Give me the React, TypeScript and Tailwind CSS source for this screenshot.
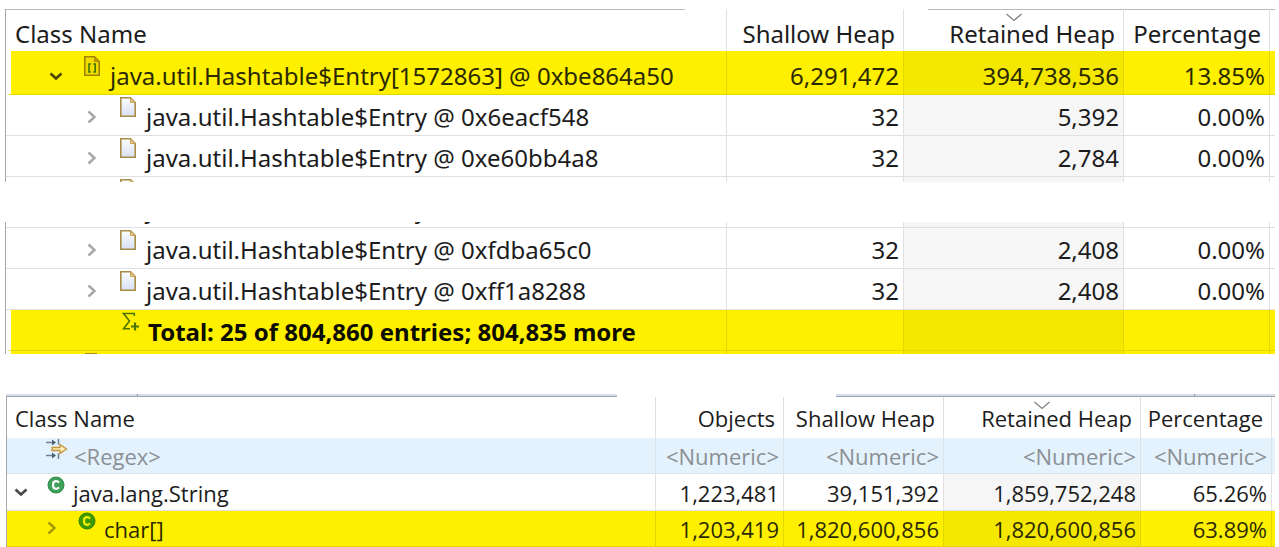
import React from "react";

function DocIcon({ array = false }: { array?: boolean }) {
  return (
    <svg viewBox="0 0 16 20" className="h-5 w-4 shrink-0" aria-hidden="true">
      <defs>
        <linearGradient id="page" x1="0" y1="0" x2="0" y2="1">
          <stop offset="0" stopColor="#fdfdff" />
          <stop offset="1" stopColor="#d6e1f3" />
        </linearGradient>
      </defs>
      <path
        d="M0.8 0.8H10.5L15.2 5.500V19.200H0.8Z"
        fill={array ? "#f2dc00" : "url(#page)"}
        stroke={array ? "#a08400" : "#a88c48"}
        strokeWidth="1.600"
      />
      <path d="M10.500 1V5.500H15Z" fill={array ? "#c49a00" : "#e3c88a"} stroke={array ? "#b08a00" : "#c8a558"} />
      {array && <path d="M6.800 8H5V16H6.800M9.400 8H11.200V16H9.400" fill="none" stroke="#3f7a00" strokeWidth="1.600" />}
    </svg>
  );
}

function SumIcon() {
  return (
    <svg viewBox="0 0 18 20" className="h-5 w-[18px] shrink-0" aria-hidden="true">
      <path d="M12.300 4V1.500H1.500L7.500 9L1.500 16.800H8" fill="none" stroke="#4d7300" strokeWidth="1.600" />
      <path d="M13 10.500V18.500M9 14.500H17" stroke="#4d7300" strokeWidth="2.200" />
    </svg>
  );
}

function ClassIcon({ marked = false }: { marked?: boolean }) {
  return (
    <svg viewBox="0 0 18 18" className="size-[18px] shrink-0" aria-hidden="true">
      <circle cx="9" cy="9" r="8" fill={marked ? "#3f9a00" : "#3fa05a"} stroke={marked ? "#2f8500" : "#2d8748"} />
      <path
        d="M12 6.600C11.200 5.600 10.300 5.200 9.300 5.200C7.300 5.200 6 6.800 6 9C6 11.200 7.300 12.800 9.300 12.800C10.300 12.800 11.200 12.400 12 11.400"
        fill="none"
        stroke={marked ? "#f4f000" : "#ffffff"}
        strokeWidth="2.200"
      />
    </svg>
  );
}

function FilterIcon() {
  return (
    <svg viewBox="0 0 22 22" className="size-[22px] shrink-0" aria-hidden="true">
      <path d="M0 4.500H9M0 17.500H9" stroke="#6d7f92" strokeWidth="1.400" />
      <path d="M6 1.500L10 4.500L6 7.500ZM6 14.500L10 17.500L6 20.500Z" fill="#4c6076" />
      <path d="M12.500 1V6.500M12.500 15.500V21" stroke="#6d7f92" strokeWidth="1.500" />
      <path d="M6 9.500H14V6.500L20.500 11L14 15.500V12.500H6Z" fill="#fdf0b8" stroke="#c4933c" strokeWidth="1.300" />
    </svg>
  );
}

function Toggle({ open = false, marked = false }: { open?: boolean; marked?: boolean }) {
  return (
    <button type="button" aria-label={open ? "Collapse" : "Expand"} className="mb-2 size-4 shrink-0">
      <svg viewBox="0 0 16 16" className="size-4" aria-hidden="true">
        {open ? (
          <path d="M2.500 5.500L8 10.500L13.500 5.500" fill="none" stroke={marked ? "#4a4600" : "#484848"} strokeWidth="2.600" />
        ) : (
          <path d="M4.500 2.500L10.500 8L4.500 13.500" fill="none" stroke={marked ? "#a39a00" : "#a6a6a6"} strokeWidth="2.400" />
        )}
      </svg>
    </button>
  );
}

function SortMark() {
  return (
    <svg viewBox="0 0 18 9" className="absolute top-1 left-1/2 h-[9px] w-[18px] -translate-x-1/2" aria-hidden="true">
      <path d="M1.500 1L9 7.500L16.500 1" fill="none" stroke="#808080" strokeWidth="1.300" />
    </svg>
  );
}

const line = "border-[#e0e0e0]";
const markedLine = "border-[#e3d700]";

function Cells({ values, marked = false }: { values: string[]; marked?: boolean }) {
  const sorted = values.length - 2;
  return (
    <>
      {values.map((value, i) => (
        <td
          key={i}
          className={`border-r border-b pr-1 pb-0.5 text-right align-bottom ${marked ? markedLine : line} ${
            i === sorted ? (marked ? "bg-[#f5e800]" : "bg-[#f6f6f6]") : ""
          }`}
        >
          {value}
        </td>
      ))}
      <td className={`border-b ${marked ? markedLine : line}`} />
    </>
  );
}

function EntryRow({ name, values }: { name: string; values: string[] }) {
  return (
    <tr className="h-[41px]">
      <td className={`border-r border-b pb-0.5 pl-[78px] align-bottom ${line}`}>
        <div className="flex items-end">
          {name && <Toggle />}
          <span className={name ? "mb-4 ml-5" : "mb-4 ml-9"}>
            <DocIcon />
          </span>
          <span className="ml-2.5">{name}</span>
        </div>
      </td>
      <Cells values={values} />
    </tr>
  );
}

function EntryColumns() {
  return (
    <colgroup>
      <col />
      <col className="w-[177px]" />
      <col className="w-[220px]" />
      <col className="w-[146px]" />
      <col className="w-[5px]" />
    </colgroup>
  );
}

const tableStyle = "w-full table-fixed border-separate border-spacing-0 whitespace-nowrap";
const head = `relative border-r ${line} pr-2 text-right align-bottom font-normal`;

export default function App() {
  return (
    <main className="flex flex-col gap-10 bg-white pt-[9px] pr-1 pl-[5px] font-['Noto_Sans','Open_Sans',sans-serif] text-[24px] leading-8 text-[#1c1c1c]">
      <section className="relative h-[173px] overflow-hidden border-l border-[#a8a8a8]">
        <div className="absolute inset-x-0 top-0 flex h-px">
          <div className="flex-1 bg-[#b8b8b8]" />
          <div className="w-[243px]" />
          <div className="w-[347px] bg-[#b8b8b8]" />
        </div>
        <table className={tableStyle}>
          <EntryColumns />
          <thead>
            <tr className="h-[42px]">
              <th className={`border-r ${line} pb-px pl-[9px] text-left align-bottom font-normal`}>Class Name</th>
              <th className={`${head} pb-px`}>Shallow Heap</th>
              <th className={`${head} pb-px`} aria-sort="descending">
                <SortMark />
                Retained Heap
              </th>
              <th className={`${head} pb-px`}>Percentage</th>
              <td />
            </tr>
          </thead>
          <tbody>
            <tr className="h-[44px] bg-[#fff000] text-[#2b2900]">
              <td className="border-r border-b border-l-[5px] border-r-[#e3d700] border-b-[#e3d700] border-l-white pb-0.5 pl-[37px] align-bottom">
                <div className="flex items-end">
                  <Toggle open marked />
                  <span className="mb-4 ml-5">
                    <DocIcon array />
                  </span>
                  <span className="ml-2.5">java.util.Hashtable$Entry[1572863] @ 0xbe864a50</span>
                </div>
              </td>
              <Cells marked values={["6,291,472", "394,738,536", "13.85%"]} />
            </tr>
            <EntryRow name="java.util.Hashtable$Entry @ 0x6eacf548" values={["32", "5,392", "0.00%"]} />
            <EntryRow name="java.util.Hashtable$Entry @ 0xe60bb4a8" values={["32", "2,784", "0.00%"]} />
            <EntryRow name="" values={["", "", ""]} />
          </tbody>
        </table>
      </section>

      <section className="h-[132px] overflow-hidden border-l border-[#a8a8a8]">
        <table className={`-mt-[35px] ${tableStyle}`}>
          <EntryColumns />
          <tbody>
            <EntryRow name="java.util.Hashtable$Entry" values={["", "", ""]} />
            <EntryRow name="java.util.Hashtable$Entry @ 0xfdba65c0" values={["32", "2,408", "0.00%"]} />
            <EntryRow name="java.util.Hashtable$Entry @ 0xff1a8288" values={["32", "2,408", "0.00%"]} />
            <tr className="h-[41px] bg-[#fff000] font-bold text-[#0c0c00]">
              <td className="border-r border-b border-l-[5px] border-r-[#e3d700] border-b-[#e3d700] border-l-white pb-0.5 pl-[111px] align-bottom">
                <div className="flex items-end">
                  <span className="mb-4">
                    <SumIcon />
                  </span>
                  <span className="ml-2">Total: 25 of 804,860 entries; 804,835 more</span>
                </div>
              </td>
              <Cells marked values={["", "", ""]} />
            </tr>
            <tr className="h-[41px] bg-[#fff000]">
              <td className="border-r border-l-[5px] border-r-[#e3d700] border-l-white pt-0.5 pl-[74px] align-top">
                <div className="h-5 w-3 bg-[#b88a00]" />
              </td>
              <Cells marked values={["", "", ""]} />
            </tr>
          </tbody>
        </table>
      </section>

      <section className="ml-px font-['Open_Sans','Noto_Sans',sans-serif] text-[22px] leading-[30px]">
        <div className="flex h-[3px]">
          <div className="flex flex-1 border-b border-[#9aa2ac] bg-[#d3dfec]">
            <div className="ml-[131px] w-px bg-[#8f98a3]" />
          </div>
          <div className="w-[219px]" />
          <div className="flex w-[439px] justify-end border-b border-[#9aa2ac] bg-[#d3dfec]">
            <div className="mr-20 w-px bg-[#8f98a3]" />
          </div>
        </div>
        <div className="border-l border-[#a8a8a8]">
          <table className={tableStyle}>
            <colgroup>
              <col />
              <col className="w-[128px]" />
              <col className="w-[160px]" />
              <col className="w-[197px]" />
              <col className="w-[131px]" />
              <col className="w-[3px]" />
            </colgroup>
            <thead>
              <tr className="h-[41px]">
                <th className={`border-r ${line} pb-[5px] pl-2 text-left align-bottom font-normal`}>Class Name</th>
                <th className={`${head} pb-[5px]`}>Objects</th>
                <th className={`${head} pb-[5px]`}>Shallow Heap</th>
                <th className={`${head} pb-[5px]`} aria-sort="descending">
                  <SortMark />
                  Retained Heap
                </th>
                <th className={`${head} pb-[5px]`}>Percentage</th>
                <td />
              </tr>
            </thead>
            <tbody>
              <tr className="h-9 bg-[#e4f2fe] text-[#8b8f94]">
                <td className="border-r border-b border-[#dbe2e8] pb-0.5 pl-[39px] align-bottom">
                  <div className="flex items-end">
                    <span className="mb-[11px]">
                      <FilterIcon />
                    </span>
                    <span className="ml-1.5">&lt;Regex&gt;</span>
                  </div>
                </td>
                {[0, 1, 2, 3].map((i) => (
                  <td key={i} className="border-r border-b border-[#dbe2e8] pr-1 pb-0.5 text-right align-bottom">
                    &lt;Numeric&gt;
                  </td>
                ))}
                <td className="border-b border-[#dbe2e8]" />
              </tr>
              <tr className="h-[37px]">
                <td className={`border-r border-b ${line} pb-0.5 pl-1.5 align-bottom`}>
                  <div className="flex items-end">
                    <Toggle open />
                    <span className="mb-3.5 ml-[18px]">
                      <ClassIcon />
                    </span>
                    <span className="ml-2">java.lang.String</span>
                  </div>
                </td>
                <Cells values={["1,223,481", "39,151,392", "1,859,752,248", "65.26%"]} />
              </tr>
              <tr className="h-9 bg-[#fff000] text-[#2b2900]">
                <td className={`border-r border-b ${markedLine} pb-0.5 pl-[37px] align-bottom`}>
                  <div className="flex items-end">
                    <Toggle marked />
                    <span className="mb-3.5 ml-[18px]">
                      <ClassIcon marked />
                    </span>
                    <span className="ml-2">char[]</span>
                  </div>
                </td>
                <Cells marked values={["1,203,419", "1,820,600,856", "1,820,600,856", "63.89%"]} />
              </tr>
            </tbody>
          </table>
        </div>
      </section>
    </main>
  );
}
